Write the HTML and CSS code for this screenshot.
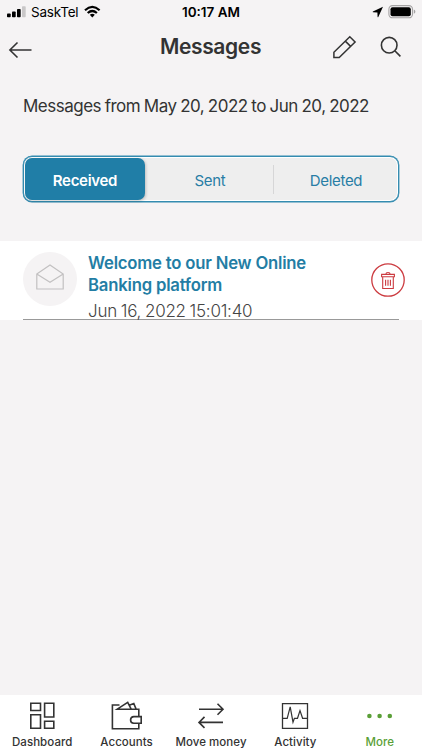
FILE: index.html
```html
<!DOCTYPE html>
<html lang="en">
<head>
<meta charset="utf-8">
<title>Messages</title>
<link rel="stylesheet" href="styles.css">
</head>
<body>
<div class="app">
  <div class="status">
    <div class="status-left">
      <svg width="20" height="14" viewBox="0 0 20 14"><rect x="0" y="8.5" width="3.7" height="3.7" rx=".8"/><rect x="5" y="6.5" width="3.7" height="5.7" rx=".8"/><rect x="10" y="4" width="3.7" height="8.2" rx=".8"/><rect x="15" y="1.2" width="3.7" height="11" rx=".8" fill="#c9c7c8"/></svg>
      <span class="carrier">SaskTel</span>
      <svg class="wifi" width="17" height="14" viewBox="0 0 17 14"><g fill="none" stroke="#000" stroke-width="2.2"><path d="M1 5.2Q8.3-1.3 15.6 5.2"/><path d="M3.7 8Q8.3 4 12.9 8"/></g><path d="M5.8 9.8Q8.3 7.7 10.8 9.8L8.3 12.5z"/></svg>
    </div>
    <span class="clock">10:17 AM</span>
    <div class="status-right">
      <svg width="12" height="12" viewBox="0 0 12 12"><path d="M11 .8.9 5.5Q.4 6 1 6.2L5.4 6.4 5.6 10.9Q5.9 11.5 6.3 10.9z"/></svg>
      <svg class="battery" width="28" height="14" viewBox="0 0 28 14"><rect x=".9" y=".6" width="23.6" height="12.2" rx="3.6" fill="none" stroke="#a5a3a4" stroke-width="1.1"/><rect x="2.5" y="2.2" width="20.3" height="9" rx="2"/><path d="M25.8 4.6Q27.4 5 27.4 6.7T25.8 8.8z" fill="#a5a3a4"/></svg>
    </div>
  </div>
  <header class="header">
    <svg width="25" height="18" viewBox="0 0 25 18" class="line"><path d="M23.5 9H1.9M9.5 1.5 1.9 9 9.5 16.5"/></svg>
    <h1>Messages</h1>
    <div class="actions">
      <svg width="25" height="25" viewBox="0 0 25 25" class="line"><path d="M1.9 22.6V17.3L17.8 1.7 23.1 7 7.2 22.6zM13.3 6.1 18.6 11.4" stroke-width="1.5"/></svg>
      <svg width="22" height="22" viewBox="0 0 22 22" class="line"><circle cx="9.2" cy="9.2" r="7.8"/><path d="m14.8 14.8 5.6 5.6"/></svg>
    </div>
  </header>
  <p class="range">Messages from May 20, 2022 to Jun 20, 2022</p>
  <div class="tabs">
    <button class="tab active"><span>Received</span></button>
    <button class="tab"><span>Sent</span></button>
    <button class="tab split"><span>Deleted</span></button>
  </div>
  <section class="message">
    <div class="row">
      <div class="envelope"><svg width="28" height="26" viewBox="0 0 28 26"><path d="M.8 10 14 .9 27.2 10v15H.8zL14 18.3 27.2 10" fill="none" stroke="#c2c0c1" stroke-width="1.2"/></svg></div>
      <div class="copy">
        <h2><span>Welcome to our New Online</span><br><span>Banking platform</span></h2>
        <time>Jun 16, 2022 15:01:40</time>
      </div>
      <button class="trash"><svg width="34" height="34" viewBox="0 0 34 34"><g fill="none" stroke="#cc3b40" stroke-width="1.1"><circle cx="17" cy="17" r="16.2" stroke-width="1.3"/><path transform="translate(10 8.7)" d="M4.8 2.6Q4.9.8 7 .8T9.2 2.6M.6 2.7H13.4V5H.6zM1.7 5V16.8H12.3V5M4.6 8V14M7 8V14M9.4 8V14"/></g></svg></button>
    </div>
  </section>
  <nav class="nav">
    <a class="item"><svg width="28" height="30" viewBox="0 0 28 30" class="icon"><path d="M2.8 2.3H12.5V9.5H2.8zM16.6 2.3H25.8V16H16.6zM2.8 13.7H12.5V27.3H2.8zM16.6 20.2H25.8V27.3H16.6z"/></svg><span>Dashboard</span></a>
    <a class="item"><svg width="32" height="30" viewBox="0 0 32 30" class="icon"><path d="M8.5 4H1.4V27.8H27.8V22.3M27.8 15.6V8.2H6.2L16.7 1.3 20.2 8.2M18.2 4.2 22.8 2.6 25.2 8.2M30.2 15.6H22.8C18.5 15.8 18.5 22.1 22.8 22.3H30.2z"/></svg><span>Accounts</span></a>
    <a class="item"><svg width="28" height="30" viewBox="0 0 28 30" class="icon"><path d="M2 8.3H26M20.5 2.8 26 8.3 20.5 13.8M26 21.4H2M7.5 15.9 2 21.4 7.5 26.9"/></svg><span>Move money</span></a>
    <a class="item"><svg width="28" height="30" viewBox="0 0 28 30" class="icon"><path d="M1.5 2.6H26.5V27.4H1.5z" stroke-width="1.3"/><path d="M1.5 17.3H6.2L9.2 5.8 12 21.2 13.4 17.3H16.5L19 9.6 21.6 17.3H26.5" stroke-width="1.2"/></svg><span>Activity</span></a>
    <a class="item more"><svg width="28" height="30" viewBox="0 0 28 30"><g fill="#5a9f37"><circle cx="3.4" cy="15" r="2.3"/><circle cx="13.6" cy="15" r="2.3"/><circle cx="23.8" cy="15" r="2.3"/></g></svg><span>More</span></a>
  </nav>
</div>
</body>
</html>
```
FILE: styles.css
```css
* { box-sizing: border-box; }
body { margin: 0; background: #f5f3f4; color: #333; font-family: Inter, "Liberation Sans", sans-serif; }
svg { display: block; flex: none; }
button { border: 0; padding: 0; font: inherit; background: none; }
h1, h2, p { margin: 0; }
span, time { white-space: nowrap; }
.app { width: 422px; height: 750px; display: flex; flex-direction: column; overflow: hidden; }
.status { height: 24px; padding: 0 6px 0 7px; display: grid; grid-template-columns: 1fr auto 1fr; align-items: center; color: #000; font-size: 14px; line-height: 24px; }
.status-left, .status-right { display: flex; align-items: center; }
.status-left { height: 22px; }
.status-left > svg:first-child { margin-top: 0; }
.carrier { margin-left: 4px; width: 48px; font-size: 13.5px; letter-spacing: -.2px; }
.wifi { margin-left: 5px; }
.clock { font-weight: 600; font-size: 13.5px; margin-left: -1px; }
.status-right { justify-content: flex-end; gap: 4px; height: 22px; margin-top: -1px; }
.header { height: 46px; padding: 0 20px 0 8px; display: grid; grid-template-columns: 1fr auto 1fr; align-items: center; }
.header > svg { margin-top: 6px; }
.header h1 { font-size: 21px; line-height: 28px; font-weight: 600; letter-spacing: -.35px; margin: 0 0 0 11px; }
.line { fill: none; stroke: #333; stroke-width: 1.6; }
.actions { display: flex; justify-content: flex-end; align-items: center; gap: 23px; }
.range { margin: 24px 0 0 23px; height: 24px; line-height: 24px; font-size: 17px; white-space: nowrap; letter-spacing: -.5px; word-spacing: -.65px; }
.tabs { margin: 38px 23px 0; height: 46px; flex: none; display: grid; grid-template-columns: 120px 1fr 1fr; border: 1px solid #348cb0; border-radius: 9px; padding: 1px; background: #eee; box-shadow: inset 0 0 0 1px #fff, 0 0 0 .4px #348cb0; }
.tab { position: relative; color: #287da5; font-size: 15px; letter-spacing: -.3px; display: flex; align-items: center; justify-content: center; padding: 2px 0 0 4px; }
.tab.active { background: #207ea7; color: #fff; font-weight: 600; border-radius: 7px; box-shadow: 1px 1px 3px #0003; padding-left: 0; }
.split::before { content: ""; position: absolute; left: 2px; top: 7px; bottom: 6px; width: 1px; background: #d6d6d7; }
.message { margin-top: 39px; height: 79px; background: #fff; padding: 0 17px 0 23px; }
.row { height: 79px; display: flex; background: linear-gradient(#999, #999) left bottom / 376px 1px no-repeat; }
.envelope { width: 54px; height: 54px; margin-top: 11px; border-radius: 50%; background: #f5f3f4; display: flex; justify-content: center; padding-top: 12px; }
.copy { margin: 12px 0 0 11px; flex: 1; }
h2 { color: #237da4; font-size: 16.7px; line-height: 21.5px; font-weight: 600; letter-spacing: -.2px; }
time { display: block; margin-top: 5px; font-size: 17px; line-height: 21px; font-weight: 300; letter-spacing: -.25px; word-spacing: -.7px; color: #444; }
.trash { width: 34px; height: 34px; margin-top: 22px; }
.nav { margin-top: auto; height: 55px; background: #fff; display: grid; grid-template-columns: repeat(5, 1fr); }
.item { display: flex; flex-direction: column; align-items: center; padding-top: 6px; font-size: 11.5px; line-height: 18px; font-weight: 500; letter-spacing: .05px; }
.item span { margin-top: 2px; }
.icon { fill: none; stroke: #333; stroke-width: 1.6; }
.more { color: #5a9f37; }
```
